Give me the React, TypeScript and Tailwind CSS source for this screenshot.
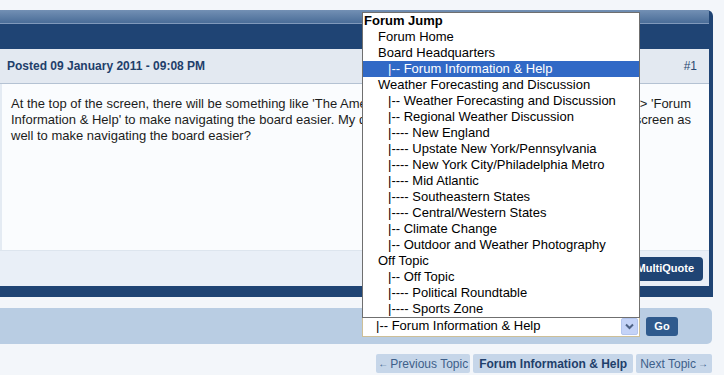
import React from 'react';

type Row = { label: string; indent: number; bold?: boolean; selected?: boolean };

const rows: Row[] = [
  { label: 'Forum Jump', indent: 0, bold: true },
  { label: 'Forum Home', indent: 1 },
  { label: 'Board Headquarters', indent: 1 },
  { label: '|-- Forum Information & Help', indent: 2, selected: true },
  { label: 'Weather Forecasting and Discussion', indent: 1 },
  { label: '|-- Weather Forecasting and Discussion', indent: 2 },
  { label: '|-- Regional Weather Discussion', indent: 2 },
  { label: '|---- New England', indent: 2 },
  { label: '|---- Upstate New York/Pennsylvania', indent: 2 },
  { label: '|---- New York City/Philadelphia Metro', indent: 2 },
  { label: '|---- Mid Atlantic', indent: 2 },
  { label: '|---- Southeastern States', indent: 2 },
  { label: '|---- Central/Western States', indent: 2 },
  { label: '|-- Climate Change', indent: 2 },
  { label: '|-- Outdoor and Weather Photography', indent: 2 },
  { label: 'Off Topic', indent: 1 },
  { label: '|-- Off Topic', indent: 2 },
  { label: '|---- Political Roundtable', indent: 2 },
  { label: '|---- Sports Zone', indent: 2 },
];

const indentClass = ['pl-[1px]', 'pl-[15px]', 'pl-[25px]'];

export default function App() {
  return (
    <div className="relative w-[724px] h-[375px] overflow-hidden bg-[#f3f6fa] pt-[10px] font-['Liberation_Sans',Arial,sans-serif]">
      {/* post panel */}
      <div className="mr-[11px] rounded-tr-[6px] bg-[#1f4474] pr-[4px] pb-[11px] overflow-hidden">
        <div className="h-[14px] bg-gradient-to-b from-[#7390b4] to-[#4a6d98] border-b border-[#8099bb]"></div>
        <div className="h-[25px]"></div>
        <div className="h-[35px] bg-[#e3e9f1] border-b border-[#b4c2d3] flex items-center justify-between pl-[7px] pr-[12px]">
          <span className="text-[12px] font-bold text-[#1f3f6b]">Posted 09 January 2011 - 09:08 PM</span>
          <span className="text-[12px] text-[#2b4a72]">#1</span>
        </div>
        <div className="h-[166px] bg-[#fafcfe] border-l-2 border-[#e4ebf3] pl-[9px] pr-[18px] pt-[12px] text-[13px] leading-[16px] text-[#1c1c1c]">
          <div className="flex whitespace-nowrap">
            <span>At the top of the screen, there will be something like 'The American Weather Forums &gt; Board Headquarters</span>
            <span className="ml-auto">&gt; 'Forum</span>
          </div>
          <div className="flex whitespace-nowrap">
            <span>Information &amp; Help' to make navigating the board easier. My question is, could this be at the bottom of the</span>
            <span className="ml-auto">screen as</span>
          </div>
          <div>well to make navigating the board easier?</div>
        </div>
        <div className="h-[36px] bg-[#e9eff7] border-t border-[#dde5ee] flex items-center justify-end pr-[6px]">
          <div className="h-[24px] w-[84px] rounded-[4px] bg-[#1f4474] flex items-center justify-end pr-[9px] text-[11px] font-bold text-white">
            MultiQuote
          </div>
        </div>
      </div>

      {/* forum jump bar */}
      <div className="mt-[11px] mr-[12px] h-[36px] rounded-r-[5px] bg-[#b9cde3] flex items-center pl-[362px]">
        <div className="h-[21px] w-[278px] border border-[#cdbf98] bg-white flex items-center">
          <span className="flex-1 pl-[13px] text-[13px] text-black whitespace-nowrap">|-- Forum Information &amp; Help</span>
          <div className="mr-[1px] h-[17px] w-[17px] rounded-[2px] bg-[#c4d3f7] border border-[#b3c5ee] flex items-center justify-center">
            <svg width="9" height="7" viewBox="0 0 9 7">
              <path d="M1 1.5 L4.5 5 L8 1.5" fill="none" stroke="#4d6185" strokeWidth="2" />
            </svg>
          </div>
        </div>
        <div className="ml-[6px] h-[19px] w-[32px] rounded-[3px] bg-[#2f5a8d] flex items-center justify-center text-[11px] font-bold text-white">
          Go
        </div>
      </div>

      {/* topic navigation */}
      <div className="mt-[10px] mr-[12px] flex justify-end gap-[3px]">
        <div className="h-[19px] px-[2px] rounded-[2px] bg-[#c6d6e9] flex items-center text-[12px] text-[#3d5f8a]">
          <span className="text-[10px] mr-[2px]">←</span>Previous Topic
        </div>
        <div className="h-[19px] px-[6px] rounded-[2px] bg-[#c6d6e9] flex items-center text-[12px] font-bold text-[#1f3f6b]">
          Forum Information &amp; Help
        </div>
        <div className="h-[19px] px-[4px] rounded-[2px] bg-[#c6d6e9] flex items-center text-[12px] text-[#3d5f8a]">
          Next Topic<span className="text-[10px] ml-[2px]">→</span>
        </div>
      </div>

      {/* open dropdown */}
      <div className="absolute left-[362px] top-[12px] w-[278px] border border-[#6f6f6f] bg-white">
        {rows.map((r, i) => (
          <div
            key={i}
            className={`h-[16px] leading-[16px] text-[13px] whitespace-nowrap ${indentClass[r.indent]} ${r.bold ? 'font-bold' : ''} ${r.selected ? 'bg-[#3169c6] text-white' : 'text-black'}`}
          >
            {r.label}
          </div>
        ))}
      </div>
    </div>
  );
}
